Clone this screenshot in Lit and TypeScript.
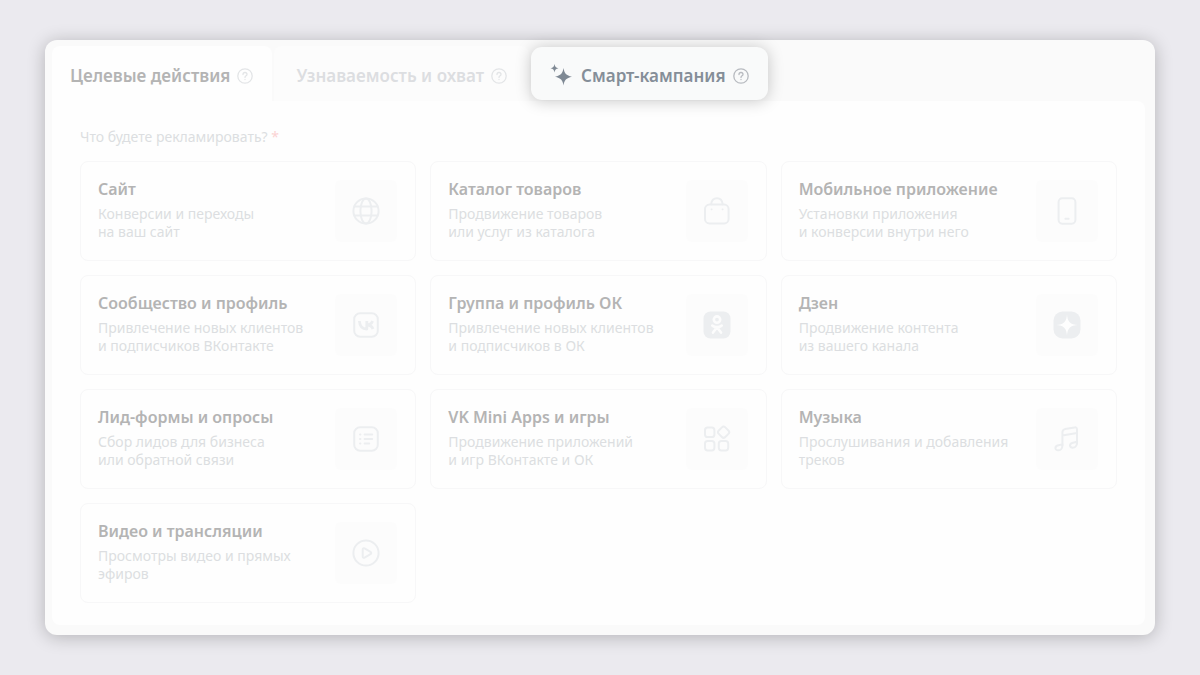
import { LitElement, html, css, svg, nothing } from "lit";
import { customElement, property, state } from "lit/decorators.js";
import { classMap } from "lit/directives/class-map.js";

const icons: Record<string, unknown> = {
  globe: svg`<circle cx="14" cy="14" r="12.6"/><ellipse cx="14" cy="14" rx="5.6" ry="12.6"/><path d="M2.500 9.600h23M2.500 18.400h23"/>`,
  bag: svg`<rect x="2" y="7.600" width="23.600" height="18.800" rx="4.500"/><path d="M8.200 7.200C8.500 3.400 10.700 1.200 14 1.200s5.300 2.200 5.600 6"/><path d="M8.400 12.400h.4M19.400 12.400h.4" stroke-width="1.600"/>`,
  phone: svg`<rect x="5.600" y="1.300" width="16.800" height="25.400" rx="3.600"/><path d="M12.400 21.800h3.200"/>`,
  vk: svg`<rect x="2.200" y="2.200" width="23.600" height="23.600" rx="6"/><path d="M7.400 10c.3 5 2.700 8 7.400 8V10M20.600 10c-.8 2.200-2.800 3.900-5.600 4M21 18c-.8-2.200-3-4-6-4" stroke-width="2.800" stroke-linecap="butt"/>`,
  ok: svg`<rect x=".5" y=".5" width="27" height="27" rx="7" class="solid"/><g class="cut"><circle cx="14" cy="8.600" r="3.200"/><path d="M9.300 14.600c2.900 2 6.500 2 9.400 0M14 16.200l-4 5.400M14 16.200l4 5.400"/></g>`,
  dzen: svg`<rect x=".5" y=".5" width="27" height="27" rx="9" class="solid"/><path class="hole" d="M14 3.200c.3 7.400 3.400 10.500 10.800 10.800-7.400.3-10.500 3.400-10.800 10.800-.3-7.400-3.400-10.500-10.800-10.800C10.600 13.700 13.700 10.600 14 3.200z"/>`,
  form: svg`<rect x="2.200" y="2.200" width="23.600" height="23.600" rx="6"/><path d="M12.600 9.400h7.600M12.600 14h7.600M12.600 18.600h4.600M8 9.400h.4M8 14h.4M8 18.600h.4"/>`,
  apps: svg`<rect x="2" y="2.600" width="9.400" height="9.400" rx="2.600"/><rect x="2" y="16" width="9.400" height="9.400" rx="2.600"/><rect x="15.800" y="16" width="9.400" height="9.400" rx="2.600"/><rect x="16" y="2.600" width="9.200" height="9.200" rx="2.400" transform="rotate(45 20.600 7.200)"/>`,
  music: svg`<path d="M9.400 20.600V7.400c0-1.800.9-2.900 2.600-3.300l9.600-1.700c1.500-.2 2.400.5 2.400 2v14.200M9.400 10.600L24 8"/><path d="M9.400 20.400c0 3-1.900 4.900-4.300 4.900-1.600 0-2.700-1-2.700-2.400 0-3.400 4-2.400 7-3.500M24 17.800c0 3-1.900 4.900-4.300 4.900-1.600 0-2.700-1-2.700-2.400 0-3.400 4-2.400 7-3.500"/>`,
  play: svg`<circle cx="14" cy="14" r="12.600"/><path d="M10.700 10.600v6.800c0 1.200.9 1.700 1.900 1.200l5.900-3.400c1-.6 1-1.800 0-2.400l-5.900-3.400c-1-.5-1.900 0-1.900 1.200z"/>`,
};

interface Goal {
  title: string;
  lines: string[];
  icon: string;
}

const goals: Goal[] = [
  { title: "Сайт", lines: ["Конверсии и переходы", "на ваш сайт"], icon: "globe" },
  { title: "Каталог товаров", lines: ["Продвижение товаров", "или услуг из каталога"], icon: "bag" },
  { title: "Мобильное приложение", lines: ["Установки приложения", "и конверсии внутри него"], icon: "phone" },
  { title: "Сообщество и профиль", lines: ["Привлечение новых клиентов", "и подписчиков ВКонтакте"], icon: "vk" },
  { title: "Группа и профиль ОК", lines: ["Привлечение новых клиентов", "и подписчиков в ОК"], icon: "ok" },
  { title: "Дзен", lines: ["Продвижение контента", "из вашего канала"], icon: "dzen" },
  { title: "Лид-формы и опросы", lines: ["Сбор лидов для бизнеса", "или обратной связи"], icon: "form" },
  { title: "VK Mini Apps и игры", lines: ["Продвижение приложений", "и игр ВКонтакте и ОК"], icon: "apps" },
  { title: "Музыка", lines: ["Прослушивания и добавления", "треков"], icon: "music" },
  { title: "Видео и трансляции", lines: ["Просмотры видео и прямых", "эфиров"], icon: "play" },
];

@customElement("goal-card")
export class GoalCard extends LitElement {
  @property({ attribute: false }) goal!: Goal;

  static styles = css`
    :host { display: block; }
    .card {
      display: flex;
      align-items: center;
      justify-content: space-between;
      gap: 8px;
      box-sizing: border-box;
      width: 100%;
      min-height: 100px;
      padding: 12px 18px 12px 17px;
      border: 1px solid #f7f7f8;
      border-radius: 8px;
      background: #fefefe;
      font: inherit;
      text-align: left;
      cursor: pointer;
    }
    .text { display: flex; flex-direction: column; gap: 5px; min-width: 0; padding-bottom: 3px; }
    .title { font-size: 16px; line-height: 22px; font-weight: 600; color: #b4b4b4; }
    .desc { font-size: 14px; line-height: 18px; color: #dcdee1; }
    .line { display: block; white-space: nowrap; }
    .tile {
      display: grid;
      place-items: center;
      flex: none;
      width: 62px;
      height: 62px;
      border-radius: 6px;
      background: #fcfcfc;
    }
    .icon {
      width: 28px;
      height: 28px;
      fill: none;
      stroke: #eceef0;
      stroke-width: 2;
      stroke-linecap: round;
      stroke-linejoin: round;
    }
    .solid { fill: #eceef0; stroke: none; }
    .cut { stroke: #fcfcfc; stroke-width: 2.600; }
    .hole { fill: #fefefe; stroke: none; }
  `;

  render() {
    const { title, lines, icon } = this.goal;
    return html`
      <button class="card" type="button">
        <span class="text">
          <span class="title">${title}</span>
          <span class="desc">${lines.map((l) => html`<span class="line">${l}</span>`)}</span>
        </span>
        <span class="tile"><svg class="icon" viewBox="0 0 28 28" aria-hidden="true">${icons[icon]}</svg></span>
      </button>
    `;
  }
}

@customElement("app-root")
export class AppRoot extends LitElement {
  @state() private active = 0;

  private tabs = [
    { label: "Целевые действия", smart: false },
    { label: "Узнаваемость и охват", smart: false },
    { label: "Смарт-кампания", smart: true },
  ];

  static styles = css`
    :host {
      display: block;
      box-sizing: border-box;
      min-height: 100vh;
      padding: 40px 45px;
      background: #ebeaef;
      font-family: "Noto Sans", "Open Sans", sans-serif;
    }
    .panel {
      padding: 6px 10px 10px 7px;
      border-radius: 12px;
      background: #fafafa;
      box-shadow: 0 2px 18px rgba(0, 0, 0, 0.24);
    }
    .tabs { display: flex; gap: 2px; }
    .tab {
      display: flex;
      align-items: center;
      gap: 7px;
      box-sizing: border-box;
      height: 55px;
      padding: 4px 19px 0 18px;
      border: 0;
      border-radius: 8px 8px 0 0;
      background: #fcfcfc;
      color: #dcdee1;
      font: inherit;
      font-size: 17px;
      line-height: 24px;
      font-weight: 600;
      white-space: nowrap;
      cursor: pointer;
    }
    .tab + .tab { padding: 4px 22px 0; }
    .tab.active { background: #fefefe; color: #b4b4b4; }
    .tab.smart {
      height: 53px;
      margin: 1px 0;
      padding: 4px 19px 0;
      border-radius: 11px;
      background: #f9fafa;
      color: #858e98;
      box-shadow: 0 1px 16px rgba(0, 0, 0, 0.22);
    }
    .help {
      width: 16px;
      height: 16px;
      flex: none;
      fill: none;
      stroke: #e3e5e7;
      stroke-width: 1.300;
      stroke-linecap: round;
    }
    .smart .help { stroke: #b8bbc0; }
    .spark { width: 24px; height: 24px; flex: none; fill: #7f8994; }
    .content {
      padding: 26px 28px 22px;
      border-radius: 0 8px 8px 8px;
      background: #fefefe;
    }
    .question {
      margin: 0 0 14px;
      font-size: 14px;
      line-height: 20px;
      font-weight: 400;
      color: #dcdee1;
    }
    .required { color: #fbd3d3; }
    .grid { display: grid; grid-template-columns: repeat(3, minmax(0, 1fr)); gap: 14px; }
  `;

  render() {
    return html`
      <main class="panel">
        <div class="tabs" role="tablist">
          ${this.tabs.map(
            (t, i) => html`
              <button
                type="button"
                role="tab"
                aria-selected=${i === this.active ? "true" : "false"}
                class=${classMap({ tab: true, active: i === this.active, smart: t.smart })}
                @click=${() => (this.active = i)}
              >
                ${t.smart
                  ? html`<svg class="spark" viewBox="0 0 24 24" aria-hidden="true">
                      <path d="M13.500 4c.9 5.400 2.600 7.400 8.500 8.700-5.900 1.300-7.600 3.300-8.500 8.700-.9-5.400-2.600-7.400-8.500-8.700 5.900-1.300 7.600-3.300 8.500-8.700z" />
                      <path d="M4.500 0c.5 2.800 1.300 3.700 4 4.200-2.700.5-3.500 1.400-4 4.200-.5-2.800-1.300-3.700-4-4.200 2.700-.5 3.500-1.400 4-4.200z" />
                    </svg>`
                  : nothing}
                <span>${t.label}</span>
                <svg class="help" viewBox="0 0 16 16" aria-hidden="true">
                  <circle cx="8" cy="8" r="7.200" />
                  <path d="M6 6.500c0-1.200.9-2 2-2s2 .8 2 1.900c0 1.400-2 1.500-2 3M8 11.500v.1" />
                </svg>
              </button>
            `,
          )}
        </div>
        <section class="content">
          <h2 class="question" id="question">Что будете рекламировать? <span class="required">*</span></h2>
          <div class="grid" role="group" aria-labelledby="question">
            ${goals.map((g) => html`<goal-card .goal=${g}></goal-card>`)}
          </div>
        </section>
      </main>
    `;
  }
}
